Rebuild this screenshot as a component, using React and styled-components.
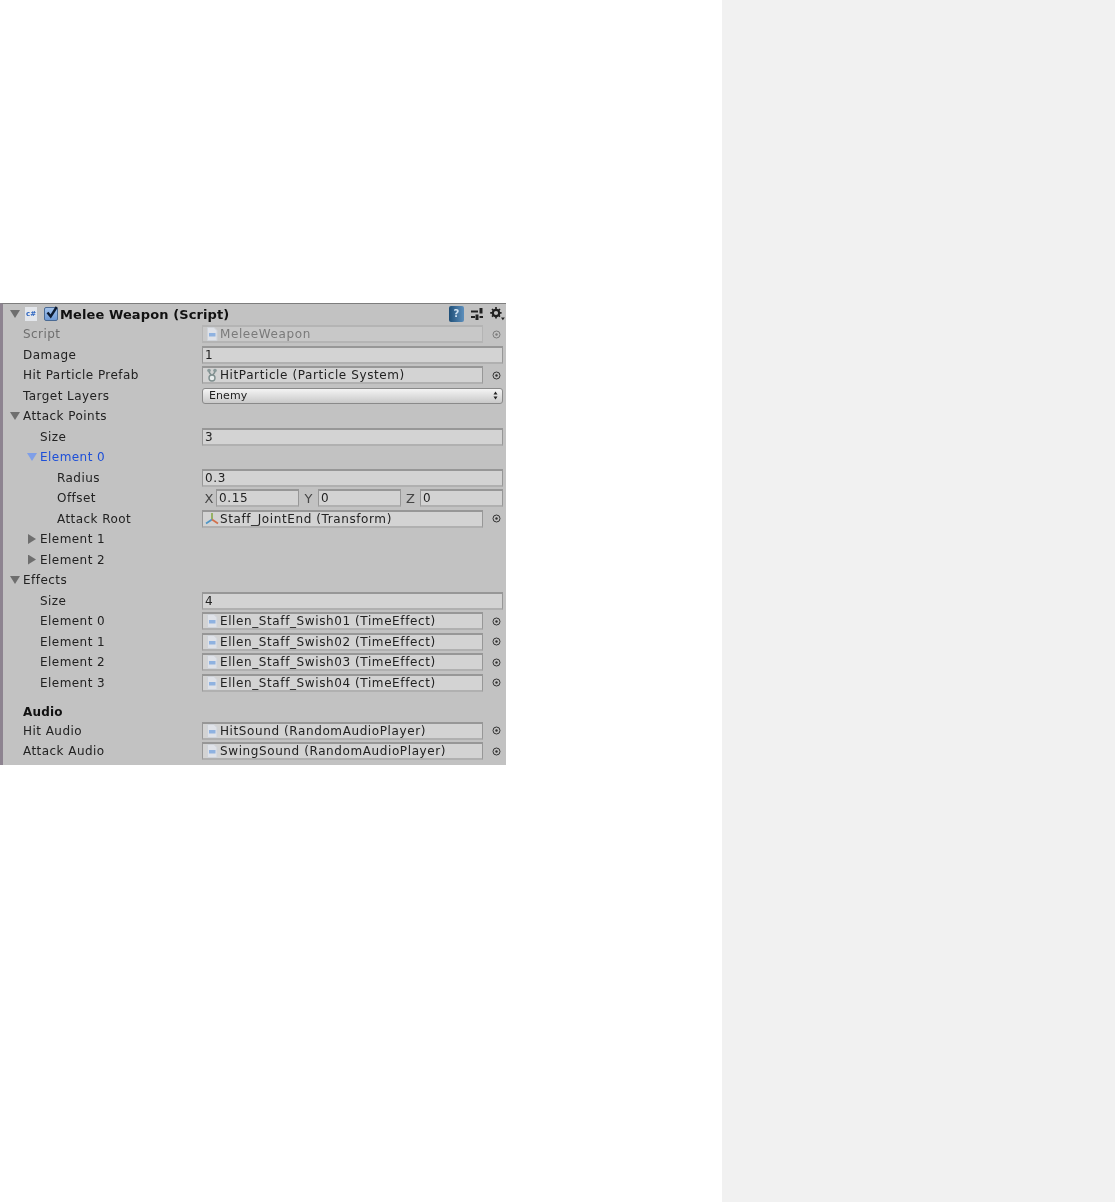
import styled, { createGlobalStyle } from "styled-components";

const GlobalStyle = createGlobalStyle`
    html, body {
        margin: 0;
        background: #fff;
    }
`;

function ScriptIcon() {
    return (
        <Icon viewBox="0 0 14 14">
            <path d="M2.5 0.5h6.5l3 3v10h-9.5z" fill="#dfe2e8" stroke="#cfd3d9" />
            <rect x="4" y="6" width="6.5" height="3.5" fill="#8fb2e0" />
        </Icon>
    );
}

function ParticleIcon() {
    return (
        <Icon viewBox="0 0 14 14">
            <circle cx="4" cy="2.5" r="1.8" fill="#8a9a9a" />
            <circle cx="10" cy="2.5" r="1.8" fill="#8a9a9a" />
            <path d="M4 4l3 4 3-4" stroke="#7f8f8f" fill="none" strokeWidth="1.4" />
            <circle cx="7" cy="10" r="3" fill="#e8ecec" stroke="#7f8f8f" strokeWidth="1.4" />
        </Icon>
    );
}

function TransformIcon() {
    return (
        <Icon viewBox="0 0 14 14">
            <path d="M7 7.5V1" stroke="#8fae5a" strokeWidth="1.8" />
            <path d="M7 7.5l-6 4" stroke="#4f96c6" strokeWidth="1.8" />
            <path d="M7 7.5l6 4" stroke="#d2704c" strokeWidth="1.8" />
        </Icon>
    );
}

function Picker({ disabled }) {
    const tone = disabled ? "#7c7c7c" : "#333";
    return (
        <PickerDot>
            <svg width="9" height="9" viewBox="0 0 9 9">
                <circle cx="4.5" cy="4.5" r="3.5" fill="none" stroke={tone} />
                <circle cx="4.5" cy="4.5" r="1.2" fill={tone} />
            </svg>
        </PickerDot>
    );
}

function ObjectRow({ label, indent, icon, value, disabled }) {
    return (
        <Row>
            <Label $indent={indent} $disabled={disabled}>{label}</Label>
            <FieldSlot>
                <ObjectField $disabled={disabled}>
                    {icon || <ScriptIcon />}
                    <FieldText>{value}</FieldText>
                </ObjectField>
                <Picker disabled={disabled} />
            </FieldSlot>
        </Row>
    );
}

function ValueRow({ label, indent, value }) {
    return (
        <Row>
            <Label $indent={indent}>{label}</Label>
            <ValueField>{value}</ValueField>
        </Row>
    );
}

function FoldRow({ label, indent, open, active }) {
    return (
        <Row>
            <FoldLabel $indent={indent} $active={active}>
                <Arrow $open={open} $active={active} />
                {label}
            </FoldLabel>
        </Row>
    );
}

export default function App() {
    return (
        <Page>
            <GlobalStyle />
            <Article>
                <Inspector>
                    <Header>
                        <Arrow $open />
                        <HeaderIcon>
                            <span>c#</span>
                        </HeaderIcon>
                        <CheckBox>
                            <svg width="16" height="14" viewBox="0 0 16 14">
                                <path d="M2.5 6.5l3.2 4 6-9.5" fill="none" stroke="#0c1a30" strokeWidth="2.4" />
                            </svg>
                        </CheckBox>
                        <Title>Melee Weapon (Script)</Title>
                        <HeaderTools>
                            <HelpBook>?</HelpBook>
                            <svg width="14" height="14" viewBox="0 0 14 14">
                                <path d="M1 4.5h7M1 10h4M9.5 10h3.5" stroke="#222" strokeWidth="1.8" />
                                <rect x="9.5" y="1" width="3" height="5.5" fill="#222" />
                                <rect x="5.5" y="7.5" width="3" height="5.5" fill="#222" />
                            </svg>
                            <svg width="15" height="14" viewBox="0 0 15 14">
                                <circle cx="6" cy="6" r="3.2" fill="none" stroke="#222" strokeWidth="2.2" />
                                <path d="M6 0v2.4M6 9.2v2.4M0.2 5.8h2.4M9.2 5.8h2.4M2 2l1.7 1.7M8.3 8l1.7 1.7M10 2L8.3 3.7M3.7 8L2 9.7" stroke="#222" strokeWidth="1.7" />
                                <path d="M11 10.5h3.8l-1.9 2.8z" fill="#222" />
                            </svg>
                        </HeaderTools>
                    </Header>
                    <ObjectRow label="Script" value="MeleeWeapon" disabled />
                    <ValueRow label="Damage" value="1" />
                    <ObjectRow label="Hit Particle Prefab" icon={<ParticleIcon />} value="HitParticle (Particle System)" />
                    <Row>
                        <Label>Target Layers</Label>
                        <Dropdown>
                            Enemy
                            <DropdownArrows>
                                <svg width="5" height="9" viewBox="0 0 5 9">
                                    <path d="M2.5 0.5L4.5 3.5H0.5zM2.5 8.5L0.5 5.5h4z" fill="#222" />
                                </svg>
                            </DropdownArrows>
                        </Dropdown>
                    </Row>
                    <FoldRow label="Attack Points" open />
                    <ValueRow label="Size" indent={1} value="3" />
                    <FoldRow label="Element 0" indent={1} open active />
                    <ValueRow label="Radius" indent={2} value="0.3" />
                    <Row>
                        <Label $indent={2}>Offset</Label>
                        <VectorFields>
                            <Axis>X</Axis><ValueField>0.15</ValueField>
                            <Axis>Y</Axis><ValueField>0</ValueField>
                            <Axis>Z</Axis><ValueField>0</ValueField>
                        </VectorFields>
                    </Row>
                    <ObjectRow label="Attack Root" indent={2} icon={<TransformIcon />} value="Staff_JointEnd (Transform)" />
                    <FoldRow label="Element 1" indent={1} />
                    <FoldRow label="Element 2" indent={1} />
                    <FoldRow label="Effects" open />
                    <ValueRow label="Size" indent={1} value="4" />
                    <ObjectRow label="Element 0" indent={1} value="Ellen_Staff_Swish01 (TimeEffect)" />
                    <ObjectRow label="Element 1" indent={1} value="Ellen_Staff_Swish02 (TimeEffect)" />
                    <ObjectRow label="Element 2" indent={1} value="Ellen_Staff_Swish03 (TimeEffect)" />
                    <ObjectRow label="Element 3" indent={1} value="Ellen_Staff_Swish04 (TimeEffect)" />
                    <SectionTitle>Audio</SectionTitle>
                    <ObjectRow label="Hit Audio" value="HitSound (RandomAudioPlayer)" />
                    <ObjectRow label="Attack Audio" value="SwingSound (RandomAudioPlayer)" />
                </Inspector>
            </Article>
            <Sidebar />
        </Page>
    );
}

const Page = styled.div`
    display: flex;
    min-height: 1202px;
    font-family: "DejaVu Sans", sans-serif;
    font-size: 12px;
    color: #222;
`;

const Article = styled.main`
    width: 722px;
    padding-top: 303px;
`;

const Sidebar = styled.aside`
    flex: 1;
    background: #f1f1f1;
`;

const Inspector = styled.section`
    width: 506px;
    height: 462px;
    box-sizing: border-box;
    background: #c2c2c2;
    border-top: 1px solid #7d7d7d;
    border-left: 3px solid #8d8390;
    padding-left: 3px;
    overflow: hidden;
    filter: blur(0.45px);
`;

const Header = styled.div`
    display: flex;
    align-items: center;
    height: 19.8px;
    padding-left: 4px;
`;

const HeaderIcon = styled.div`
    width: 12px;
    height: 14px;
    margin-left: 5px;
    margin-right: 7px;
    background: #e4e7ec;
    display: flex;
    align-items: center;
    justify-content: center;
    & > span {
        font-size: 7px;
        font-weight: 700;
        color: #2f66c0;
    }
`;

const CheckBox = styled.div`
    width: 14px;
    height: 14px;
    box-sizing: border-box;
    background: linear-gradient(#a3c2ea, #6f9ad6);
    border: 1px solid #4a6a94;
    border-radius: 2px;
    margin-right: 2px;
    display: flex;
    & > svg {
        flex: none;
        margin-top: -2px;
    }
`;

const Title = styled.div`
    font-weight: 700;
    font-size: 13px;
    letter-spacing: 0.1px;
    color: #111;
    padding-top: 2px;
`;

const HeaderTools = styled.div`
    margin-left: auto;
    display: flex;
    align-items: center;
    gap: 6px;
    padding-right: 1px;
`;

const HelpBook = styled.div`
    width: 15px;
    height: 16px;
    border-radius: 2px;
    background: linear-gradient(90deg, #1f4f78, #5d8fbc);
    color: #cfe0f0;
    font-size: 10px;
    font-weight: 700;
    text-align: center;
    line-height: 16px;
`;

const Row = styled.div`
    display: flex;
    align-items: center;
    height: 20.5px;
    padding-right: 3px;
`;

const Label = styled.div`
    width: 179px;
    flex: none;
    padding-left: 17px;
    text-indent: ${(p) => (p.$indent || 0) * 17}px;
    letter-spacing: 0.45px;
    color: ${(p) => (p.$disabled ? "#6f6f6f" : "#222")};
    white-space: nowrap;
`;

const FoldLabel = styled.div`
    display: flex;
    align-items: center;
    gap: 3px;
    padding-left: ${(p) => 4 + (p.$indent || 0) * 17}px;
    letter-spacing: 0.45px;
    color: ${(p) => (p.$active ? "#1d4fd8" : "#222")};
    white-space: nowrap;
`;

const Arrow = styled.span`
    flex: none;
    width: 10px;
    height: 10px;
    background: ${(p) => (p.$active ? "#7f9fe8" : "#6e6e6e")};
    clip-path: ${(p) => (p.$open ? "polygon(0 10%, 100% 10%, 50% 90%)" : "polygon(10% 0, 90% 50%, 10% 100%)")};
`;

const FieldSlot = styled.div`
    flex: 1;
    display: flex;
    align-items: center;
`;

const Field = styled.div`
    flex: 1;
    height: 18px;
    box-sizing: border-box;
    display: flex;
    align-items: center;
    background: #d3d3d3;
    border: 2px solid #979797;
    border-bottom-color: #b0b0b0;
    border-left-width: 1px;
    border-right-width: 1px;
    white-space: nowrap;
    min-width: 0;
    letter-spacing: 0.6px;
`;

const ValueField = styled(Field)`
    padding-left: 2px;
`;

const ObjectField = styled(Field)`
    padding-left: 2px;
    gap: 1px;
    color: ${(p) => (p.$disabled ? "#7a7a7a" : "#222")};
    ${(p) => p.$disabled && "background: #c8c8c8; border-color: #b4b4b4;"}
`;

const FieldText = styled.span`
    white-space: nowrap;
`;

const Icon = styled.svg`
    width: 14px;
    height: 14px;
    flex: none;
`;

const PickerDot = styled.div`
    width: 20px;
    flex: none;
    display: flex;
    justify-content: center;
    padding-left: 7px;
    box-sizing: border-box;
`;

const Dropdown = styled.div`
    flex: 1;
    height: 16px;
    box-sizing: border-box;
    display: flex;
    align-items: center;
    justify-content: space-between;
    padding: 0 4px 0 6px;
    font-size: 11px;
    letter-spacing: 0.1px;
    background: linear-gradient(#f4f4f4, #c9c9c9);
    border: 1px solid #8a8a8a;
    border-radius: 3px;
`;

const DropdownArrows = styled.span`
    display: flex;
`;

const VectorFields = styled.div`
    flex: 1;
    display: grid;
    grid-template-columns: 14px 1fr 19px 1fr 19px 1fr;
    align-items: center;
`;

const Axis = styled.span`
    color: #444;
    font-size: 13px;
    text-align: center;
`;

const SectionTitle = styled.div`
    font-weight: 700;
    padding-left: 17px;
    margin-top: 11.5px;
    height: 16px;
    letter-spacing: 0.2px;
    display: flex;
    align-items: center;
    color: #111;
`;
